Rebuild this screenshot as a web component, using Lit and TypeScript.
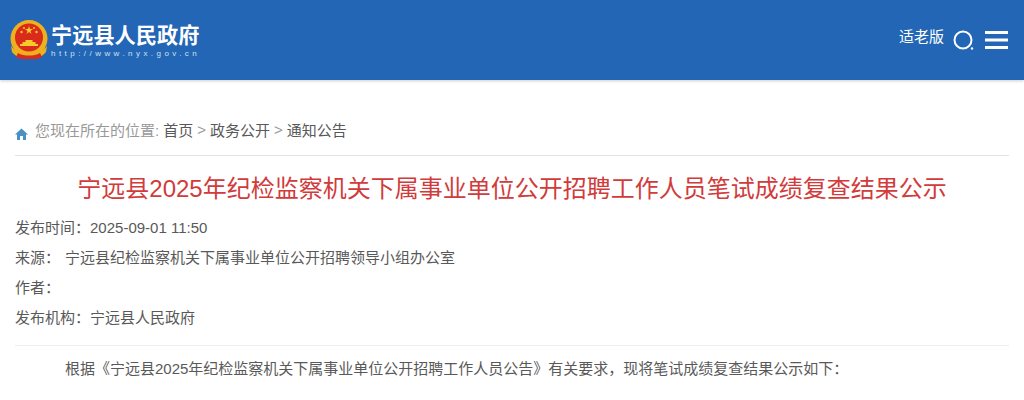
import { LitElement, html, css } from "lit";
import { customElement } from "lit/decorators.js";

@customElement("app-root")
export class AppRoot extends LitElement {
  static styles = css`
    :host { display: block; width: 1024px; height: 400px; overflow: hidden; background: #fff; font-family: "Liberation Sans", "Noto Sans CJK SC", sans-serif; color: #595959; }
    .header { height: 80px; box-sizing: border-box; background: #2266b5; box-shadow: 0 1px 3px rgba(0,0,0,.2); display: flex; align-items: center; padding: 0 16px 0 10px; }
    .logo { display: flex; align-items: center; gap: 3px; }
    .emblem { width: 38px; height: 40px; display: block; }
    .brand { display: flex; flex-direction: column; padding-top: 1px; }
    .name { color: #fff; font-size: 21.2px; line-height: 25px; font-weight: 700; }
    .url { color: #cfe0f3; font-size: 8px; line-height: 11px; letter-spacing: 3.45px; }
    .tools { margin-left: auto; display: flex; align-items: center; color: #fff; font-size: 15px; }
    .tools span { padding-bottom: 9px; margin-right: 9px; }
    .tools svg + svg { margin-left: 11px; }
    .main { padding: 39px 15px 0; }
    .crumb { display: flex; align-items: center; height: 21px; padding-bottom: 15px; border-bottom: 1px solid #e4e4e4; font-size: 15px; color: #999; }
    .crumb svg { margin: 8px 7px 0 0; }
    .crumb .lead { margin-right: 4px; }
    .crumb b { font-weight: 400; color: #595959; }
    .crumb i { font-style: normal; margin: 0 4px; }
    h1 { margin: 17px 0 8px; text-align: center; font-size: 24px; line-height: 32px; font-weight: 400; color: #d13b3b; }
    .meta { font-size: 15px; line-height: 30px; }
    .meta .src { margin-left: 5px; }
    .rule { border-top: 1px solid #eee; margin-top: 12px; }
    p { margin: 13px 0 0; text-indent: 50px; font-size: 15px; line-height: 20px; }
  `;
  render() {
    return html`
      <div class="header">
        <div class="logo">
          <svg class="emblem" viewBox="0 0 38 40">
            <circle cx="19" cy="18.5" r="18.5" fill="#eeb11e"/>
            <circle cx="19" cy="17.5" r="14" fill="#d92a1c"/>
            <polygon points="19,6 20,9 23,9 20.5,11 21.5,14 19,12 16.5,14 17.5,11 15,9 18,9" fill="#f6c92c"/>
            <circle cx="11.5" cy="12" r="1.2" fill="#f6c92c"/><circle cx="26.5" cy="12" r="1.2" fill="#f6c92c"/>
            <circle cx="14" cy="8" r="1" fill="#f6c92c"/><circle cx="24" cy="8" r="1" fill="#f6c92c"/>
            <path d="M10 26v-2h2.500v-2h3v-2h7v2h3v2h2.500v2z" fill="#f6c92c"/>
            <path d="M1 26c4 5 10 7 18 7s14-2 18-7l-1 6c-4 5-10 7-17 7S6 37 2 32z" fill="#eeb11e"/>
            <path d="M8 33c3 2 7 2.500 11 2.500s8-.5 11-2.500l2 4-5 2h-16l-5-2z" fill="#d92a1c"/>
          </svg>
          <div class="brand">
            <div class="name">宁远县人民政府</div>
            <div class="url">http://www.nyx.gov.cn</div>
          </div>
        </div>
        <div class="tools">
          <span>适老版</span>
          <svg width="21" height="22" viewBox="0 0 21 22">
            <circle cx="10" cy="11" r="8.500" fill="none" stroke="#fff" stroke-width="2"/>
            <circle cx="19" cy="19.500" r="1.200" fill="#fff"/>
          </svg>
          <svg width="23" height="20" viewBox="0 0 23 20">
            <rect y="1" width="23" height="3" fill="#fff"/><rect y="8.500" width="23" height="3" fill="#fff"/><rect y="16" width="23" height="3" fill="#fff"/>
          </svg>
        </div>
      </div>
      <div class="main">
        <div class="crumb">
          <svg width="13" height="12" viewBox="0 0 13 12"><path d="M6.500 0.500L13 6.500h-2V12H8V8H5v4H2V6.500H0z" fill="#4a90c4"/></svg>
          <span class="lead">您现在所在的位置:</span><b>首页</b><i>&gt;</i><b>政务公开</b><i>&gt;</i><b>通知公告</b>
        </div>
        <h1>宁远县2025年纪检监察机关下属事业单位公开招聘工作人员笔试成绩复查结果公示</h1>
        <div class="meta">
          <div>发布时间：<span>2025-09-01 11:50</span></div>
          <div>来源：<span class="src">宁远县纪检监察机关下属事业单位公开招聘领导小组办公室</span></div>
          <div>作者：</div>
          <div>发布机构：<span>宁远县人民政府</span></div>
        </div>
        <div class="rule"></div>
        <p>根据《宁远县2025年纪检监察机关下属事业单位公开招聘工作人员公告》有关要求，现将笔试成绩复查结果公示如下：</p>
      </div>
    `;
  }
}
